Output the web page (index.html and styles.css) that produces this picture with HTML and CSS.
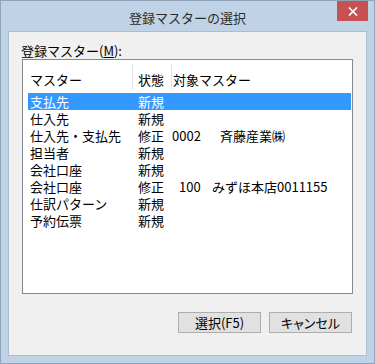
FILE: index.html
```html
<!DOCTYPE html>
<html lang="ja">
<head>
<meta charset="utf-8">
<link rel="stylesheet" href="styles.css">
</head>
<body>
<div class="window">
  <div class="titlebar">
    <span class="title">登録マスターの選択</span>
    <div class="close">
      <svg width="10" height="9" viewBox="0 0 10 9"><path d="M1 0.5 L9 8.5 M9 0.5 L1 8.5" stroke="#fff" stroke-width="1.7" fill="none"/></svg>
    </div>
  </div>
  <div class="client">
    <div class="label">登録マスター(<u>M</u>):</div>
    <div class="listbox">
      <div class="header">
        <div class="hcell h1">マスター</div>
        <div class="hsep"></div>
        <div class="hcell h2">状態</div>
        <div class="hsep"></div>
        <div class="hcell h3">対象マスター</div>
      </div>
      <div class="row selected"><span class="c1">支払先</span><span class="c2">新規</span><span class="c3"></span></div>
      <div class="row"><span class="c1">仕入先</span><span class="c2">新規</span><span class="c3"></span></div>
      <div class="row"><span class="c1">仕入先・支払先</span><span class="c2">修正</span><span class="c3"><span class="code code-a">0002</span><span class="name">斉藤産業㈱</span></span></div>
      <div class="row"><span class="c1">担当者</span><span class="c2">新規</span><span class="c3"></span></div>
      <div class="row"><span class="c1">会社口座</span><span class="c2">新規</span><span class="c3"></span></div>
      <div class="row"><span class="c1">会社口座</span><span class="c2">修正</span><span class="c3"><span class="code code-b">100</span><span class="name">みずほ本店0011155</span></span></div>
      <div class="row"><span class="c1">仕訳パターン</span><span class="c2">新規</span><span class="c3"></span></div>
      <div class="row"><span class="c1">予約伝票</span><span class="c2">新規</span><span class="c3"></span></div>
    </div>
    <div class="buttons">
      <button class="btn">選択(F5)</button>
      <button class="btn">キャンセル</button>
    </div>
  </div>
</div>
</body>
</html>
```

FILE: styles.css
```css
* { box-sizing: border-box; }
html, body { margin: 0; padding: 0; }
body {
  width: 375px;
  height: 364px;
  font-family: "Noto Sans CJK JP", "Noto Sans", sans-serif;
  font-size: 13px;
  color: #000;
  overflow: hidden;
}
.window {
  width: 375px;
  height: 364px;
  background: #c0d3e6;
  border: 1px solid #8fa4ba;
  padding: 0 7px 7px 7px;
  display: flex;
  flex-direction: column;
}
.titlebar {
  position: relative;
  height: 30px;
  margin: 0 -7px;
  display: flex;
  justify-content: center;
  align-items: center;
  padding-top: 3px;
}
.title {
  font-size: 13px;
  line-height: 16px;
  color: #2b2b2b;
}
.close {
  position: absolute;
  top: 0;
  right: 6px;
  width: 31px;
  height: 20px;
  background: #c75050;
  display: flex;
  align-items: center;
  justify-content: center;
}
.client {
  flex: 1;
  background: #f0f0f0;
  border: 1px solid #aebdcd;
  padding: 11px 13px 0 12px;
  display: flex;
  flex-direction: column;
}
.label {
  height: 16px;
  line-height: 16px;
  padding-left: 0;
}
.label u { text-underline-offset: 1px; }
.listbox {
  height: 235px;
  margin-left: 1px;
  background: #fff;
  border: 1px solid #868a90;
  padding: 0 1px 0 5px;
  display: flex;
  flex-direction: column;
}
.header {
  height: 33px;
  display: grid;
  grid-template-columns: 104px 1px 38px 1px 1fr;
}
.hcell {
  padding-top: 11px;
  line-height: 17px;
  white-space: nowrap;
}
.h1 { padding-left: 2px; }
.h2 { padding-left: 5px; }
.h3 { padding-left: 1px; }
.hsep {
  background: #e3e3e3;
  margin: 4px 0 4px 0;
}
.row {
  height: 17px;
  line-height: 17px;
  display: grid;
  grid-template-columns: 108px 36px 1fr;
  white-space: nowrap;
}
.row.selected {
  background: #3399ff;
  color: #fff;
}
.c1 { padding-left: 2px; }
.c2 { padding-left: 2px; }
.c3 { padding-left: 0; }
.code { display: inline-block; }
.code-a { width: 48px; }
.code-b { width: 40px; padding-left: 7px; }
.buttons {
  display: flex;
  justify-content: flex-end;
  gap: 8px;
  margin-top: 18px;
  padding-right: 1px;
}
.btn {
  width: 83px;
  height: 21px;
  background: #e1e1e1;
  border: 1px solid #adadad;
  border-radius: 0;
  font-family: "Noto Sans CJK JP", "Noto Sans", sans-serif;
  font-size: 13px;
  line-height: 17px;
  color: #000;
  padding: 0;
  font-feature-settings: "palt";
}
```
